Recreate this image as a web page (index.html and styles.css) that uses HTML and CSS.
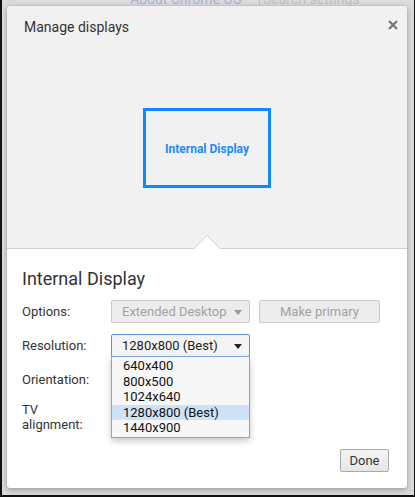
FILE: index.html
```
<!DOCTYPE html>
<html>
<head>
<meta charset="utf-8">
<link rel="stylesheet" href="styles.css">
</head>
<body>
<div class="frame">
  <div class="bgpage">
    <span class="bg-about">About Chrome OS</span>
    <span class="bg-search">Search settings</span>
  </div>
  <div class="dialog">
    <div class="top">
      <div class="title-row">
        <h1 class="title">Manage displays</h1>
        <svg class="close" width="10" height="10" viewBox="0 0 10 10"><path d="M1 1 L9 9 M9 1 L1 9" stroke="#7a7a7a" stroke-width="2.4" stroke-linecap="butt"/></svg>
      </div>
      <div class="canvas">
        <div class="display">Internal Display</div>
      </div>
    </div>
    <div class="bottom">
      <h2 class="heading">Internal Display</h2>
      <div class="form">
        <div class="label">Options:</div>
        <div class="controls">
          <div class="select disabled"><span>Extended Desktop</span><i class="arrow"></i></div>
          <div class="button disabled wide">Make primary</div>
        </div>
        <div class="label">Resolution:</div>
        <div class="controls">
          <div class="select-wrap">
            <div class="select focused"><span>1280x800 (Best)</span><i class="arrow"></i></div>
            <ul class="list">
              <li>640x400</li>
              <li>800x500</li>
              <li>1024x640</li>
              <li class="sel">1280x800 (Best)</li>
              <li>1440x900</li>
            </ul>
          </div>
        </div>
        <div class="label">Orientation:</div>
        <div class="controls"></div>
        <div class="label">TV<br>alignment:</div>
        <div class="controls"></div>
      </div>
      <div class="footer">
        <div class="button done">Done</div>
      </div>
    </div>
  </div>
</div>
</body>
</html>
```
FILE: styles.css
```
* { box-sizing: border-box; }
html, body { margin: 0; padding: 0; }
body {
  width: 415px;
  height: 497px;
  overflow: hidden;
  font-family: Roboto, "Noto Sans", sans-serif;
  background: #000;
}
.frame {
  position: relative;
  width: 415px;
  height: 497px;
  border-left: 2px solid #111;
  border-right: 1px solid #111;
  border-bottom: 2px solid #111;
  background: #dcdcdc;
  padding: 6px 0 0 5px;
  overflow: hidden;
}
.bgpage {
  position: absolute;
  left: 0; top: -8px;
  width: 100%;
  height: 14px;
  font-size: 14px;
  line-height: 14px;
  color: #a9b6cc;
}
.bg-about { position: absolute; left: 128px; top: 0; }
.bg-search {
  position: absolute; left: 257px; top: 0;
  padding-left: 3px;
  border-left: 1px solid #c4c4c4;
  color: #c0c0c0;
}
.dialog {
  position: relative;
  width: 400px;
  height: 482px;
  background: #fff;
  border-radius: 3px;
  box-shadow: 0 2px 6px rgba(0,0,0,0.28), 0 0 2px rgba(0,0,0,0.15);
  display: flex;
  flex-direction: column;
}
.top {
  position: relative;
  height: 243px;
  background: #f1f1f1;
  border-bottom: 1px solid #cfcfcf;
  border-radius: 3px 3px 0 0;
}
.top::before,
.top::after {
  content: "";
  position: absolute;
  left: 186px;
  width: 0; height: 0;
  border-left: 14px solid transparent;
  border-right: 14px solid transparent;
}
.top::before {
  bottom: -1px;
  border-bottom: 14px solid #cfcfcf;
}
.top::after {
  bottom: -1px;
  left: 187px;
  border-left-width: 13px;
  border-right-width: 13px;
  border-bottom: 13px solid #fff;
}
.title-row {
  display: flex;
  justify-content: space-between;
  align-items: flex-start;
  padding: 12px 9px 0 17px;
}
.title {
  margin: 0;
  font-size: 14px;
  font-weight: 400;
  color: #333;
  line-height: 18px;
}
.close { margin-top: 2px; }
.canvas {
  display: flex;
  justify-content: center;
  padding-top: 72px;
  padding-left: 0;
}
.display {
  width: 128px;
  height: 80px;
  border: 3px solid #0a8cff;
  display: flex;
  align-items: center;
  justify-content: center;
  color: #1a8cff;
  font-weight: 700;
  font-size: 12px;
  padding-top: 2px;
}
.bottom {
  flex: 1;
  padding: 19px 18px 0 15px;
  display: flex;
  flex-direction: column;
}
.heading {
  margin: 0;
  font-size: 18px;
  font-weight: 400;
  color: #333;
  line-height: 22px;
}
.form {
  margin-top: 10px;
  display: grid;
  grid-template-columns: 89px 1fr;
  row-gap: 11px;
  font-size: 13px;
  color: #333;
}
.label {
  display: flex;
  align-items: center;
  min-height: 23px;
  line-height: 15px;
}
.controls {
  display: flex;
  gap: 9px;
  align-items: center;
  min-height: 23px;
}
.select {
  position: relative;
  width: 139px;
  height: 23px;
  border: 1px solid #c2c2c2;
  border-radius: 2px;
  background: linear-gradient(#f2f2f2, #ebebeb);
  padding: 0 0 0 10px;
  display: flex;
  align-items: center;
  font-size: 13px;
  color: #222;
}
.select.disabled { color: #a2a2a2; background: #ececec; border-color: #cacaca; }
.select.focused { border-color: #5d8fe0; background: #f4f4f4; }
.arrow {
  position: absolute;
  right: 7px;
  top: 9px;
  width: 0; height: 0;
  border-left: 4.5px solid transparent;
  border-right: 4.5px solid transparent;
  border-top: 5px solid #222;
}
.disabled .arrow { border-top-color: #999; }
.button {
  height: 23px;
  border: 1px solid #b5b5b5;
  border-radius: 2px;
  background: linear-gradient(#f5f5f5, #e6e6e6);
  display: flex;
  align-items: center;
  justify-content: center;
  font-size: 13px;
  color: #333;
}
.button.disabled { color: #a2a2a2; background: #ececec; border-color: #cacaca; }
.wide { width: 121px; }
.select-wrap { position: relative; }
.list {
  position: absolute;
  left: 0; top: 22px;
  width: 139px;
  margin: 0;
  padding: 1px 0 1px;
  list-style: none;
  background: #f7f7f7;
  border: 1px solid #7ea3e6;
  box-shadow: 0 3px 6px rgba(0,0,0,0.22);
  z-index: 5;
}
.list li {
  height: 15.5px;
  line-height: 15px;
  padding-left: 11px;
  font-size: 13px;
  color: #111;
}
.list li.sel { background: #cde2f6; }
.footer {
  margin-top: auto;
  display: flex;
  justify-content: flex-end;
  padding-bottom: 16px;
}
.done {
  width: 49px;
  height: 23px;
  border-color: #a9a9a9;
}
```
